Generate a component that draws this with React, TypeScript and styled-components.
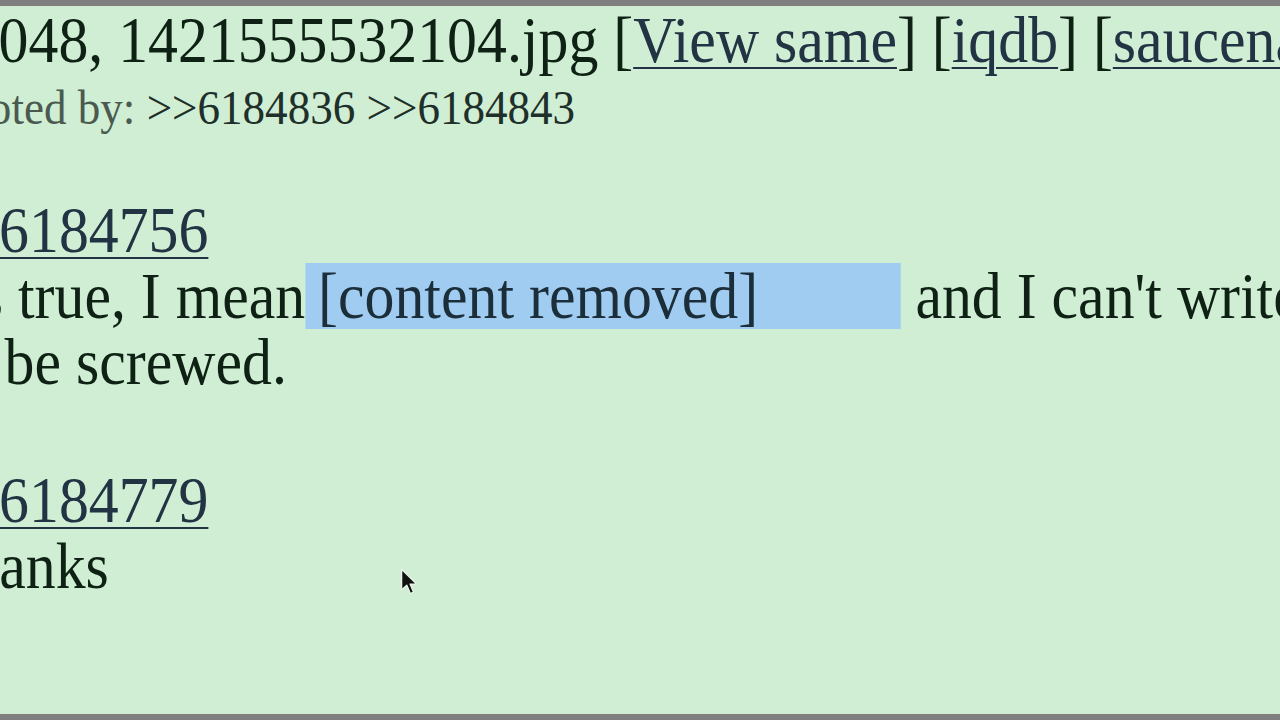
import React from "react";
import styled, { createGlobalStyle } from "styled-components";

const Global = createGlobalStyle`
  html, body { margin: 0; padding: 0; background: #808080; }
  body { font-family: "Liberation Serif", "Times New Roman", serif; }
`;

const Screen = styled.div`
  width: 1280px;
  height: 720px;
  display: flex;
  flex-direction: column;
  overflow: hidden;
  background: #808080;
`;

const Strip = styled.div<{ $h: number }>`
  height: ${(p) => p.$h}px;
  flex: none;
  background: #7f7f7f;
`;

const Board = styled.div`
  position: relative;
  flex: 1;
  overflow: hidden;
  background: #cfeed3;
`;

const Zoomed = styled.div`
  width: 1500px;
  transform: scaleX(0.92);
  transform-origin: left top;
  padding-top: 1px;
  white-space: nowrap;
  color: #0e2114;
`;

const Section = styled.div<{ $gap: number }>`
  display: flex;
  flex-direction: column;
  margin-top: ${(p) => p.$gap}px;
`;

const Line = styled.div<{ $size: number; $lh: number; $shift?: number; $muted?: boolean }>`
  font-size: ${(p) => p.$size}px;
  line-height: ${(p) => p.$lh}px;
  height: ${(p) => p.$lh}px;
  margin-left: ${(p) => p.$shift ?? 0}px;
  color: ${(p) => (p.$muted ? "#4b5a50" : "inherit")};
`;

const Link = styled.span`
  color: #223343;
  text-decoration: underline;
  text-decoration-thickness: 2px;
  text-underline-offset: 5px;
`;

const Quote = styled.span`
  color: #1f2f2a;
`;

const Mark = styled.span`
  display: inline-block;
  width: 647px;
  height: 66px;
  vertical-align: top;
  background: #9fccf0;
  padding-left: 14px;
  box-sizing: border-box;
  color: #1b2e3a;
`;

const Cursor = styled.svg`
  position: absolute;
  left: 399px;
  top: 561px;
  width: 19px;
  height: 30px;
`;

export default function App() {
  return (
    <>
      <Global />
      <Screen>
        <Strip $h={6} />
        <Board>
          <Zoomed>
            <Section $gap={0}>
              <Line $size={65} $lh={66} $shift={-34}>
                2048, 1421555532104.jpg [<Link>View same</Link>] [<Link>iqdb</Link>] [
                <Link>saucenao</Link>] [<Link>google</Link>]
              </Line>
              <Line $size={49} $lh={69} $shift={-72} $muted>
                Quoted by: <Quote>&gt;&gt;6184836</Quote> <Quote>&gt;&gt;6184843</Quote>
              </Line>
            </Section>
            <Section $gap={55}>
              <Line $size={65} $lh={66} $shift={-1}>
                <Link>6184756</Link>
              </Line>
              <Line $size={65} $lh={66} $shift={-22}>
                s true, I mean<Mark>[content removed]</Mark> and I can't write
              </Line>
              <Line $size={65} $lh={66} $shift={5}>
                be screwed.
              </Line>
            </Section>
            <Section $gap={72}>
              <Line $size={65} $lh={66} $shift={-1}>
                <Link>6184779</Link>
              </Line>
              <Line $size={65} $lh={66} $shift={-73}>
                Thanks
              </Line>
            </Section>
          </Zoomed>
          <Cursor viewBox="0 0 16 26">
            <path
              d="M2 2 L2 20 L6.5 15.8 L9.6 23 L12.4 21.8 L9.4 14.8 L15 14.8 Z"
              fill="#111"
              stroke="#e8f4ea"
              strokeWidth="1.2"
              strokeLinejoin="round"
            />
          </Cursor>
        </Board>
        <Strip $h={6} />
      </Screen>
    </>
  );
}
